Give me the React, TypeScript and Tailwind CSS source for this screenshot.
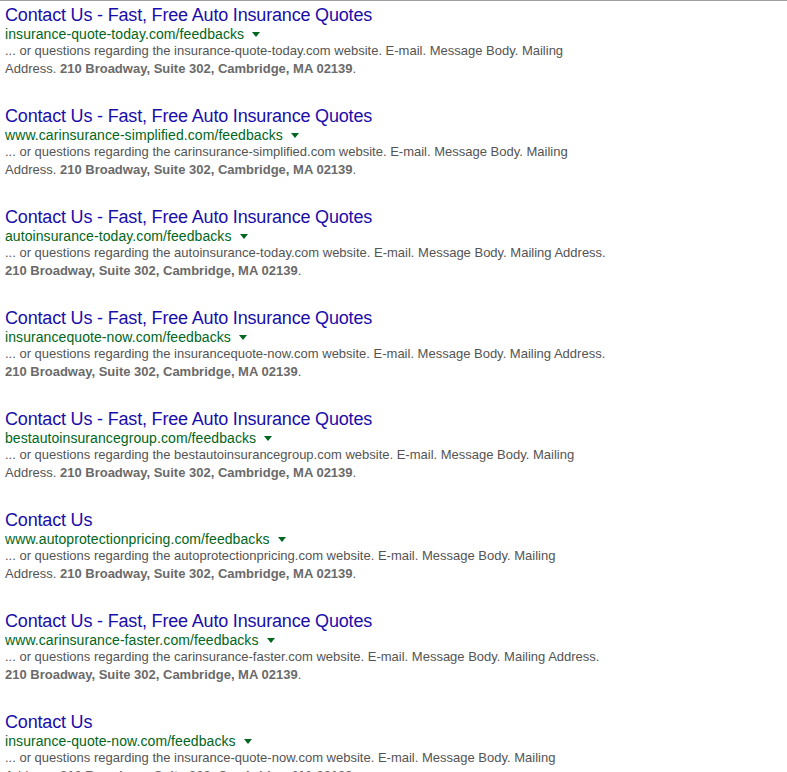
import React from 'react';

const address = "210 Broadway, Suite 302, Cambridge, MA 02139";

const results = [
    { title: "Contact Us - Fast, Free Auto Insurance Quotes", url: "insurance-quote-today.com/feedbacks", site: "insurance-quote-today.com" },
    { title: "Contact Us - Fast, Free Auto Insurance Quotes", url: "www.carinsurance-simplified.com/feedbacks", site: "carinsurance-simplified.com" },
    { title: "Contact Us - Fast, Free Auto Insurance Quotes", url: "autoinsurance-today.com/feedbacks", site: "autoinsurance-today.com" },
    { title: "Contact Us - Fast, Free Auto Insurance Quotes", url: "insurancequote-now.com/feedbacks", site: "insurancequote-now.com" },
    { title: "Contact Us - Fast, Free Auto Insurance Quotes", url: "bestautoinsurancegroup.com/feedbacks", site: "bestautoinsurancegroup.com" },
    { title: "Contact Us", url: "www.autoprotectionpricing.com/feedbacks", site: "autoprotectionpricing.com" },
    { title: "Contact Us - Fast, Free Auto Insurance Quotes", url: "www.carinsurance-faster.com/feedbacks", site: "carinsurance-faster.com" },
    { title: "Contact Us", url: "insurance-quote-now.com/feedbacks", site: "insurance-quote-now.com" },
];

function Result({ item }) {
    return (
        <div className="mb-[27px]">
            <h3 className="text-[18px] leading-[22px] tracking-[-0.18px] text-[#1a0dab] font-normal">
                <a href="#">{item.title}</a>
            </h3>
            <div className="flex items-center text-[14px] leading-[16px] tracking-[0.08px] text-[#006621]">
                <cite className="not-italic">{item.url}</cite>
                {/* dropdown arrow */}
                <span className="ml-[8px] mt-[1px] w-0 h-0 border-t-[5px] border-t-[#006621] border-x-[4px] border-x-transparent" />
            </div>
            <p className="w-[602px] text-[13px] leading-[18px] text-[#545454]">
                ... or questions regarding the {item.site} website. E-mail. Message Body. Mailing Address.{" "}
                <b className="font-bold text-[#6a6a6a]">{address}</b>.
            </p>
        </div>
    );
}

export default function App() {
    return (
        <div className="min-h-screen bg-white border-t border-[#9e9e9e] pt-[3px] pl-[5px] font-['Liberation_Sans',Arial,sans-serif] overflow-hidden">
            {results.map((r, i) => (
                <Result key={i} item={r} />
            ))}
        </div>
    );
}
